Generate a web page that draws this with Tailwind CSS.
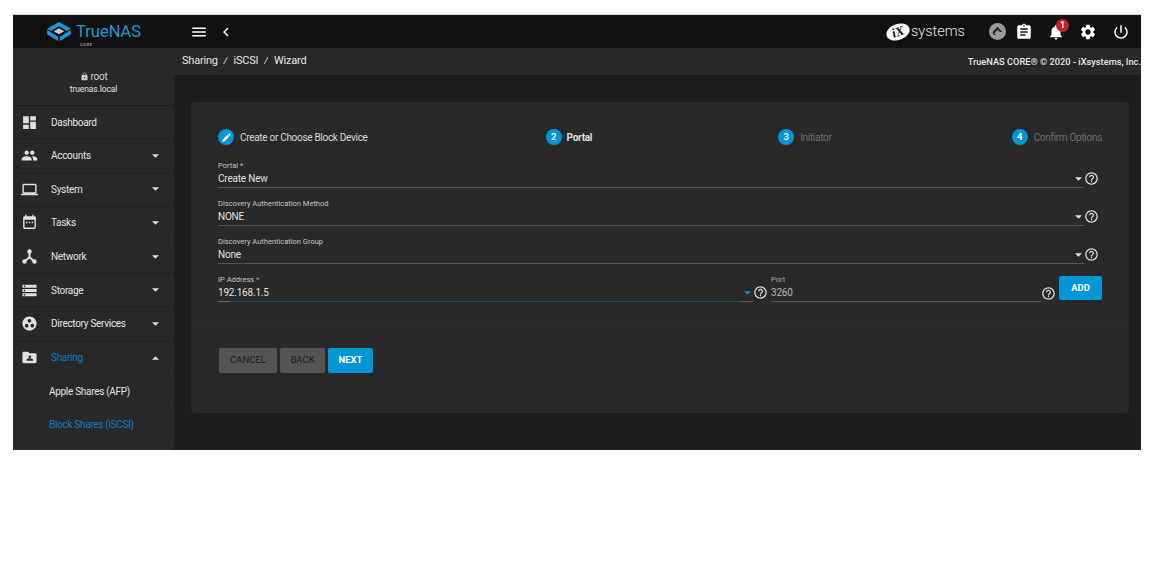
<!doctype html>
<html lang="en">
<head>
<meta charset="utf-8">
<title>TrueNAS</title>
<script src="https://cdn.jsdelivr.net/npm/@tailwindcss/browser@4"></script>
</head>
<body class="bg-white font-['Roboto',sans-serif] h-[567px] overflow-hidden">
<div class="h-[15px] ml-[13px] w-[1128px] flex flex-col justify-end"><div class="h-[1px] bg-[#d8d8d8]"></div></div>
<div class="ml-[13px] w-[1128px] h-[435px] flex flex-col overflow-hidden bg-[#1e1e1e]">
  <header class="h-[33px] shrink-0 bg-[#111111] flex items-center text-white">
    <div class="w-[161px] flex items-center pl-[34px] shrink-0 relative">
      <svg viewBox="0 0 25 20" class="w-[24px] h-[19px] shrink-0" fill="#1a9ad6"><path d="M12.500 0 25 7 21 9.500 12.500 4.500 4 9.500 0 7z"/><path d="M0 8.500V13L11.500 20V15.500zM25 8.500V13L13.500 20V15.500z"/><path d="M12.500 6.500 18 9.700 12.500 13 7 9.700z" fill="#c9c9c9"/></svg>
      <span class="ml-[5px] text-[16.500px] leading-[20px] text-[#1a9ad6] whitespace-nowrap">TrueNAS</span>
      <span class="absolute left-[67px] top-[20px] text-[4px] leading-[5px] text-[#9a9a9a] font-bold tracking-[0.5px]">CORE</span>
    </div>
    <svg viewBox="0 0 24 24" class="ml-[16px] w-[18px] h-[18px]" fill="currentColor"><path d="M3 18h18v-2H3v2zm0-5h18v-2H3v2zm0-7v2h18V6H3z"/></svg>
    <svg viewBox="0 0 24 24" class="ml-[9px] w-[18px] h-[18px]" fill="currentColor"><path d="M15.410 7.410L14 6l-6 6 6 6 1.410-1.410L10.830 12z"/></svg>
    <div class="ml-auto flex items-center">
      <div class="flex items-center w-[78px]">
        <span class="w-[24px] h-[16px] shrink-0 rounded-[50%] bg-white text-[#111111] text-[13px] font-bold italic leading-[16px] text-center -rotate-[20deg] font-['Liberation_Serif',serif]">iX</span>
        <span class="ml-[1px] text-[14.500px] font-light leading-[18px] text-[#e4e4e4] whitespace-nowrap">systems</span>
      </div>
      <div class="ml-[25px] w-[17px] h-[17px] rounded-full bg-[#9b9b9b] flex items-center justify-center">
        <svg viewBox="0 0 16 16" class="w-[13px] h-[13px]" fill="#222222"><path d="M8 2 14 8.500 11 8.500 8 6 4 10 7 13 2.500 11.500 2 8.500z"/></svg>
      </div>
      <svg viewBox="0 0 24 24" class="ml-[9px] w-[18px] h-[18px]" fill="currentColor"><path d="M19 3h-4.180C14.400 1.840 13.300 1 12 1c-1.300 0-2.400.840-2.820 2H5c-1.100 0-2 .900-2 2v14c0 1.100.900 2 2 2h14c1.100 0 2-.900 2-2V5c0-1.100-.900-2-2-2zm-7 0c.550 0 1 .450 1 1s-.450 1-1 1-1-.450-1-1 .450-1 1-1zm2 14H7v-2h7v2zm3-4H7v-2h10v2zm0-4H7V7h10v2z"/></svg>
      <div class="relative ml-[14px] w-[18px] h-[18px]">
        <svg viewBox="0 0 24 24" class="w-[18px] h-[18px]" fill="currentColor"><path d="M12 22c1.100 0 2-.900 2-2h-4c0 1.100.890 2 2 2zm6-6v-5c0-3.070-1.640-5.640-4.500-6.320V4c0-.830-.670-1.500-1.500-1.500s-1.500.670-1.500 1.500v.680C7.630 5.360 6 7.920 6 11v5l-2 2v1h16v-1l-2-2z"/></svg>
        <span class="absolute left-[9px] -top-[4px] w-[13px] h-[13px] rounded-full bg-[#c8202b] text-white text-[9px] font-bold leading-[13px] text-center">1</span>
      </div>
      <svg viewBox="0 0 24 24" class="ml-[14px] w-[18px] h-[18px]" fill="currentColor"><path d="M19.140 12.940c.040-.300.060-.610.060-.940 0-.320-.020-.640-.070-.940l2.030-1.580c.180-.140.230-.410.120-.610l-1.920-3.320c-.120-.220-.370-.290-.590-.220l-2.390.960c-.500-.380-1.030-.700-1.620-.940l-.360-2.540c-.040-.240-.240-.410-.480-.410h-3.840c-.240 0-.430.170-.470.410l-.360 2.540c-.590.240-1.130.570-1.620.940l-2.390-.960c-.220-.080-.470 0-.590.220L2.740 8.870c-.120.210-.080.470.120.610l2.030 1.580c-.050.300-.090.630-.090.940s.020.640.070.940l-2.030 1.580c-.180.140-.230.410-.120.610l1.920 3.320c.120.220.370.290.590.220l2.390-.960c.500.380 1.030.700 1.620.940l.360 2.540c.050.240.240.410.480.410h3.840c.240 0 .440-.170.470-.410l.360-2.540c.590-.240 1.130-.560 1.620-.940l2.390.960c.220.080.470 0 .590-.220l1.920-3.320c.120-.220.070-.470-.120-.610l-2.010-1.580zM12 15.600c-1.980 0-3.600-1.620-3.600-3.600s1.620-3.600 3.600-3.600 3.600 1.620 3.600 3.600-1.620 3.600-3.600 3.600z"/></svg>
      <svg viewBox="0 0 24 24" class="ml-[15px] mr-[11px] w-[18px] h-[18px]" fill="currentColor"><path d="M13 3h-2v10h2V3zm4.830 2.170l-1.420 1.420C17.990 7.860 19 9.810 19 12c0 3.870-3.130 7-7 7s-7-3.130-7-7c0-2.190 1.010-4.140 2.580-5.420L6.170 5.170C4.230 6.820 3 9.260 3 12c0 4.970 4.030 9 9 9s9-4.030 9-9c0-2.740-1.230-5.180-3.170-6.830z"/></svg>
    </div>
  </header>
  <div class="flex flex-1 min-h-0">
    <aside class="w-[161px] shrink-0 bg-[#282828] text-[10px] tracking-[-0.3px] text-[#e2e2e2]">
      <div class="h-[58px] flex flex-col items-center pt-[21px] border-b border-[#1e1e1e]">
        <div class="flex items-center h-[14px] text-[10px] text-[#d0d0d0]">
          <svg viewBox="0 0 24 24" class="w-[9px] h-[9px] mr-[2px]" fill="currentColor"><path d="M18 8h-1V6c0-2.760-2.240-5-5-5S7 3.240 7 6v2H6c-1.100 0-2 .900-2 2v10c0 1.100.900 2 2 2h12c1.100 0 2-.900 2-2V10c0-1.100-.900-2-2-2zm-6 9c-1.100 0-2-.900-2-2s.900-2 2-2 2 .900 2 2-.900 2-2 2zm3.100-9H8.900V6c0-1.710 1.390-3.100 3.100-3.100 1.710 0 3.100 1.390 3.100 3.100v2z"/></svg>
          root
        </div>
        <div class="h-[12px] leading-[12px] text-[8.500px] tracking-[-0.1px]">truenas.local</div>
      </div>
      <div class="h-[34px] flex items-center pl-[8px] border-b-2 border-[#242424]">
        <svg viewBox="0 0 24 24" class="w-[17px] h-[17px]" fill="#e0e0e0"><path d="M3 13h8V3H3v10zm0 8h8v-6H3v6zm10 0h8V11h-8v10zm0-18v6h8V3h-8z"/></svg>
        <span class="ml-[13px]">Dashboard</span>
      </div>
      <div class="h-[33.600px] flex items-center pl-[8px] border-b-2 border-[#242424]">
        <svg viewBox="0 0 24 24" class="w-[17px] h-[17px]" fill="#e0e0e0"><path d="M16 11c1.660 0 2.990-1.340 2.990-3S17.660 5 16 5c-1.660 0-3 1.340-3 3s1.340 3 3 3zm-8 0c1.660 0 2.990-1.340 2.990-3S9.660 5 8 5C6.340 5 5 6.340 5 8s1.340 3 3 3zm0 2c-2.330 0-7 1.170-7 3.500V19h14v-2.500c0-2.330-4.670-3.500-7-3.500zm8 0c-.290 0-.620.020-.970.050 1.160.840 1.970 1.970 1.970 3.450V19h6v-2.500c0-2.330-4.670-3.500-7-3.500z"/></svg>
        <span class="ml-[13px]">Accounts</span>
        <svg viewBox="0 0 8 4" class="ml-auto mr-[15px] w-[7px] h-[4px]" fill="#e0e0e0"><path d="M0 0h8L4 4z"/></svg>
      </div>
      <div class="h-[33.600px] flex items-center pl-[8px] border-b-2 border-[#242424]">
        <svg viewBox="0 0 24 24" class="w-[17px] h-[17px]" fill="#e0e0e0"><path d="M20 18c1.100 0 1.990-.900 1.990-2L22 6c0-1.100-.900-2-2-2H4c-1.100 0-2 .900-2 2v10c0 1.100.900 2 2 2H0v2h24v-2h-4zM4 6h16v10H4V6z"/></svg>
        <span class="ml-[13px]">System</span>
        <svg viewBox="0 0 8 4" class="ml-auto mr-[15px] w-[7px] h-[4px]" fill="#e0e0e0"><path d="M0 0h8L4 4z"/></svg>
      </div>
      <div class="h-[33.600px] flex items-center pl-[8px] border-b-2 border-[#242424]">
        <svg viewBox="0 0 24 24" class="w-[17px] h-[17px]" fill="#e0e0e0"><path d="M19 19H5V8h14m-3-7v2H8V1H6v2H5c-1.110 0-2 .890-2 2v14a2 2 0 0 0 2 2h14a2 2 0 0 0 2-2V5a2 2 0 0 0-2-2h-1V1M7 11h2v2H7zm4 0h2v2h-2zm4 0h2v2h-2z"/></svg>
        <span class="ml-[13px]">Tasks</span>
        <svg viewBox="0 0 8 4" class="ml-auto mr-[15px] w-[7px] h-[4px]" fill="#e0e0e0"><path d="M0 0h8L4 4z"/></svg>
      </div>
      <div class="h-[33.600px] flex items-center pl-[8px] border-b-2 border-[#242424]">
        <svg viewBox="0 0 24 24" class="w-[17px] h-[17px]" fill="#e0e0e0" stroke="#e0e0e0" stroke-width="2.800"><circle cx="12" cy="5" r="1.800"/><circle cx="5" cy="19" r="1.800"/><circle cx="19" cy="19" r="1.800"/><path d="M12 5v8M12 13 5 19M12 13l7 6" fill="none"/></svg>
        <span class="ml-[13px]">Network</span>
        <svg viewBox="0 0 8 4" class="ml-auto mr-[15px] w-[7px] h-[4px]" fill="#e0e0e0"><path d="M0 0h8L4 4z"/></svg>
      </div>
      <div class="h-[33.600px] flex items-center pl-[8px] border-b-2 border-[#242424]">
        <svg viewBox="0 0 24 24" class="w-[17px] h-[17px]" fill="#e0e0e0"><path d="M2 20h20v-4H2v4zm2-3h2v2H4v-2zM2 4v4h20V4H2zm4 3H4V5h2v2zm-4 7h20v-4H2v4zm2-3h2v2H4v-2z"/></svg>
        <span class="ml-[13px]">Storage</span>
        <svg viewBox="0 0 8 4" class="ml-auto mr-[15px] w-[7px] h-[4px]" fill="#e0e0e0"><path d="M0 0h8L4 4z"/></svg>
      </div>
      <div class="h-[33.600px] flex items-center pl-[8px] border-b-2 border-[#242424]">
        <svg viewBox="0 0 24 24" class="w-[17px] h-[17px]" fill="#e0e0e0"><path d="M12 2C6.480 2 2 6.480 2 12s4.480 10 10 10 10-4.480 10-10S17.520 2 12 2zM8 17.500c-1.380 0-2.500-1.120-2.500-2.500s1.120-2.500 2.500-2.500 2.500 1.120 2.500 2.500-1.120 2.500-2.500 2.500zM9.500 8c0-1.380 1.120-2.500 2.500-2.500s2.500 1.120 2.500 2.500-1.120 2.500-2.500 2.500S9.500 9.380 9.500 8zm6.500 9.500c-1.380 0-2.500-1.120-2.500-2.500s1.120-2.500 2.500-2.500 2.500 1.120 2.500 2.500-1.120 2.500-2.500 2.500z"/></svg>
        <span class="ml-[13px]">Directory Services</span>
        <svg viewBox="0 0 8 4" class="ml-auto mr-[15px] w-[7px] h-[4px]" fill="#e0e0e0"><path d="M0 0h8L4 4z"/></svg>
      </div>
      <div class="h-[33.600px] flex items-center pl-[8px] border-b border-[#242424]">
        <svg viewBox="0 0 24 24" class="w-[17px] h-[17px]" fill="#e0e0e0"><path d="M20 6h-8l-2-2H4c-1.100 0-1.990.900-1.990 2L2 18c0 1.100.900 2 2 2h16c1.100 0 2-.900 2-2V8c0-1.100-.900-2-2-2z"/><circle cx="12.500" cy="11" r="1.800" fill="#282828"/><path d="M8 16.500h9V15c0-1-3-1.800-4.500-1.800S8 14 8 15z" fill="#282828"/></svg>
        <span class="ml-[13px] text-[#0d7fc0]">Sharing</span>
        <svg viewBox="0 0 8 4" class="ml-auto mr-[15px] w-[7px] h-[4px]" fill="#e0e0e0"><path d="M0 4h8L4 0z"/></svg>
      </div>
      <div class="h-[33px] flex items-center pl-[36px] border-b border-[#242424]">Apple Shares (AFP)</div>
      <div class="h-[33px] flex items-center pl-[36px] border-b border-[#242424] text-[#0d7fc0]">Block Shares (iSCSI)</div>
    </aside>
    <main class="flex-1 min-w-0 flex flex-col">
      <div class="h-[27px] shrink-0 bg-[#282828] flex items-center pl-[8px] text-[#e6e6e6]">
        <span class="text-[11px] tracking-[-0.2px]">Sharing</span><span class="mx-[6px] text-[9px] italic">/</span>
        <span class="text-[11px] tracking-[-0.2px]">iSCSI</span><span class="mx-[6px] text-[9px] italic">/</span>
        <span class="text-[11px] tracking-[-0.2px]">Wizard</span>
        <span class="ml-auto whitespace-nowrap text-[9.250px] font-medium text-[#e6e6e6]">TrueNAS CORE® © 2020 - iXsystems, Inc.</span>
      </div>
      <div class="ml-[17px] mr-[12px] mt-[27px] h-[311px] bg-[#292929] rounded-[4px] flex flex-col">
        <div class="px-[27px] pt-[27px]">
          <div class="h-[16px] flex items-center text-[10px] tracking-[-0.3px]">
            <div class="flex items-center">
              <span class="w-[16px] h-[16px] rounded-full bg-[#0095d5] flex items-center justify-center">
                <svg viewBox="0 0 24 24" class="w-[11px] h-[11px]" fill="white"><path d="M3 17.250V21h3.750L17.810 9.940l-3.750-3.750L3 17.250zM20.710 7.040c.390-.390.390-1.020 0-1.410l-2.340-2.340c-.390-.390-1.020-.390-1.410 0l-1.830 1.830 3.750 3.750 1.830-1.830z"/></svg>
              </span>
              <span class="ml-[6px] text-[#d8d8d8]">Create or Choose Block Device</span>
            </div>
            <div class="flex items-center ml-[178px]">
              <span class="w-[16px] h-[16px] rounded-full bg-[#0095d5] text-white text-[9.500px] font-medium leading-[16px] text-center">2</span>
              <span class="ml-[5px] font-bold text-[#e0e0e0]">Portal</span>
            </div>
            <div class="flex items-center ml-[186px]">
              <span class="w-[16px] h-[16px] rounded-full bg-[#0095d5] text-white text-[9.500px] font-medium leading-[16px] text-center">3</span>
              <span class="ml-[6px] text-[#6f6f6f]">Initiator</span>
            </div>
            <div class="flex items-center ml-auto">
              <span class="w-[16px] h-[16px] rounded-full bg-[#0095d5] text-white text-[9.500px] font-bold leading-[16px] text-center">4</span>
              <span class="ml-[6px] text-[#6f6f6f]">Confirm Options</span>
            </div>
          </div>
          <div class="mt-[16px] flex flex-col gap-[11px]">
            <div class="h-[27px] relative">
              <div class="w-[866px] h-[27px] border-b border-[#555555] flex flex-col">
                <div class="h-[10px] leading-[10px] text-[7.500px] text-[#c4c4c4]">Portal <span>*</span></div>
                <div class="flex items-center h-[15px] text-[10px] tracking-[-0.2px] text-[#e0e0e0]">Create New<svg viewBox="0 0 8 4" class="ml-auto mr-[2px] w-[7px] h-[4px]" fill="#e0e0e0"><path d="M0 0h8L4 4z"/></svg></div>
              </div>
              <svg viewBox="0 0 24 24" class="absolute left-[866px] top-[10px] w-[15px] h-[15px]" fill="#e0e0e0"><path d="M11 18h2v-2h-2v2zm1-16C6.480 2 2 6.480 2 12s4.480 10 10 10 10-4.480 10-10S17.520 2 12 2zm0 18c-4.410 0-8-3.590-8-8s3.590-8 8-8 8 3.590 8 8-3.590 8-8 8zm0-14c-2.210 0-4 1.790-4 4h2c0-1.100.900-2 2-2s2 .900 2 2c0 2-3 1.750-3 5h2c0-2.250 3-2.500 3-5 0-2.210-1.790-4-4-4z"/></svg>
            </div>
            <div class="h-[27px] relative">
              <div class="w-[866px] h-[27px] border-b border-[#555555] flex flex-col">
                <div class="h-[10px] leading-[10px] text-[7.500px] text-[#c4c4c4]">Discovery Authentication Method</div>
                <div class="flex items-center h-[15px] text-[10px] tracking-[-0.2px] text-[#e0e0e0]">NONE<svg viewBox="0 0 8 4" class="ml-auto mr-[2px] w-[7px] h-[4px]" fill="#e0e0e0"><path d="M0 0h8L4 4z"/></svg></div>
              </div>
              <svg viewBox="0 0 24 24" class="absolute left-[866px] top-[10px] w-[15px] h-[15px]" fill="#e0e0e0"><path d="M11 18h2v-2h-2v2zm1-16C6.480 2 2 6.480 2 12s4.480 10 10 10 10-4.480 10-10S17.520 2 12 2zm0 18c-4.410 0-8-3.590-8-8s3.590-8 8-8 8 3.590 8 8-3.590 8-8 8zm0-14c-2.210 0-4 1.790-4 4h2c0-1.100.900-2 2-2s2 .900 2 2c0 2-3 1.750-3 5h2c0-2.250 3-2.500 3-5 0-2.210-1.790-4-4-4z"/></svg>
            </div>
            <div class="h-[27px] relative">
              <div class="w-[866px] h-[27px] border-b border-[#555555] flex flex-col">
                <div class="h-[10px] leading-[10px] text-[7.500px] text-[#c4c4c4]">Discovery Authentication Group</div>
                <div class="flex items-center h-[15px] text-[10px] tracking-[-0.2px] text-[#e0e0e0]">None<svg viewBox="0 0 8 4" class="ml-auto mr-[2px] w-[7px] h-[4px]" fill="#e0e0e0"><path d="M0 0h8L4 4z"/></svg></div>
              </div>
              <svg viewBox="0 0 24 24" class="absolute left-[866px] top-[10px] w-[15px] h-[15px]" fill="#e0e0e0"><path d="M11 18h2v-2h-2v2zm1-16C6.480 2 2 6.480 2 12s4.480 10 10 10 10-4.480 10-10S17.520 2 12 2zm0 18c-4.410 0-8-3.590-8-8s3.590-8 8-8 8 3.590 8 8-3.590 8-8 8zm0-14c-2.210 0-4 1.790-4 4h2c0-1.100.900-2 2-2s2 .900 2 2c0 2-3 1.750-3 5h2c0-2.250 3-2.500 3-5 0-2.210-1.790-4-4-4z"/></svg>
            </div>
            <div class="flex h-[27px]">
              <div class="w-[535px] h-[27px] shrink-0 flex flex-col">
                <div class="h-[10px] leading-[10px] text-[7.500px] text-[#c4c4c4]">IP Address <span class="text-[#d9a514]">*</span></div>
                <div class="flex items-center h-[15px] text-[10px] tracking-[-0.2px] text-[#e0e0e0]">192.168.1.5<svg viewBox="0 0 8 4" class="ml-auto mr-[2px] w-[7px] h-[4px]" fill="#0095d5"><path d="M0 0h8L4 4z"/></svg></div>
                <div class="h-[1px] mt-[1px] flex"><div class="w-[12px] bg-[#666666]"></div><div class="w-[510px] bg-[#134e6a]"></div><div class="flex-1 bg-[#555555]"></div></div>
              </div>
              <svg viewBox="0 0 24 24" class="mt-[10px] w-[15px] h-[15px] shrink-0" fill="#e0e0e0"><path d="M11 18h2v-2h-2v2zm1-16C6.480 2 2 6.480 2 12s4.480 10 10 10 10-4.480 10-10S17.520 2 12 2zm0 18c-4.410 0-8-3.590-8-8s3.590-8 8-8 8 3.590 8 8-3.590 8-8 8zm0-14c-2.210 0-4 1.790-4 4h2c0-1.100.900-2 2-2s2 .900 2 2c0 2-3 1.750-3 5h2c0-2.250 3-2.500 3-5 0-2.210-1.790-4-4-4z"/></svg>
              <div class="ml-[3px] w-[270px] h-[27px] shrink-0 border-b border-[#555555] flex flex-col">
                <div class="h-[10px] leading-[10px] text-[7.500px] text-[#a8a8a8]">Port</div>
                <div class="h-[15px] leading-[15px] text-[10px] tracking-[-0.2px] text-[#b8b8b8]">3260</div>
              </div>
              <svg viewBox="0 0 24 24" class="mt-[11px] w-[15px] h-[15px] shrink-0" fill="#e0e0e0"><path d="M11 18h2v-2h-2v2zm1-16C6.480 2 2 6.480 2 12s4.480 10 10 10 10-4.480 10-10S17.520 2 12 2zm0 18c-4.410 0-8-3.590-8-8s3.590-8 8-8 8 3.590 8 8-3.590 8-8 8zm0-14c-2.210 0-4 1.790-4 4h2c0-1.100.900-2 2-2s2 .900 2 2c0 2-3 1.750-3 5h2c0-2.250 3-2.500 3-5 0-2.210-1.790-4-4-4z"/></svg>
              <button class="ml-[3px] mt-[1px] w-[43px] h-[24px] shrink-0 rounded-[2px] bg-[#0095d5] text-white text-[9.500px] font-bold">ADD</button>
            </div>
          </div>
        </div>
        <div class="mt-[22px] h-[1px] bg-[#2f2f2f]"></div>
        <div class="mt-[23px] pl-[28px] flex gap-[3px]">
          <button class="w-[58px] h-[25px] rounded-[2px] bg-[#555555] text-[#1a1a1a] text-[9.500px]">CANCEL</button>
          <button class="w-[45px] h-[25px] rounded-[2px] bg-[#555555] text-[#1a1a1a] text-[9.500px]">BACK</button>
          <button class="w-[45px] h-[25px] rounded-[2px] bg-[#0095d5] text-white text-[9.500px] font-bold">NEXT</button>
        </div>
      </div>
    </main>
  </div>
</div>
</body>
</html>
